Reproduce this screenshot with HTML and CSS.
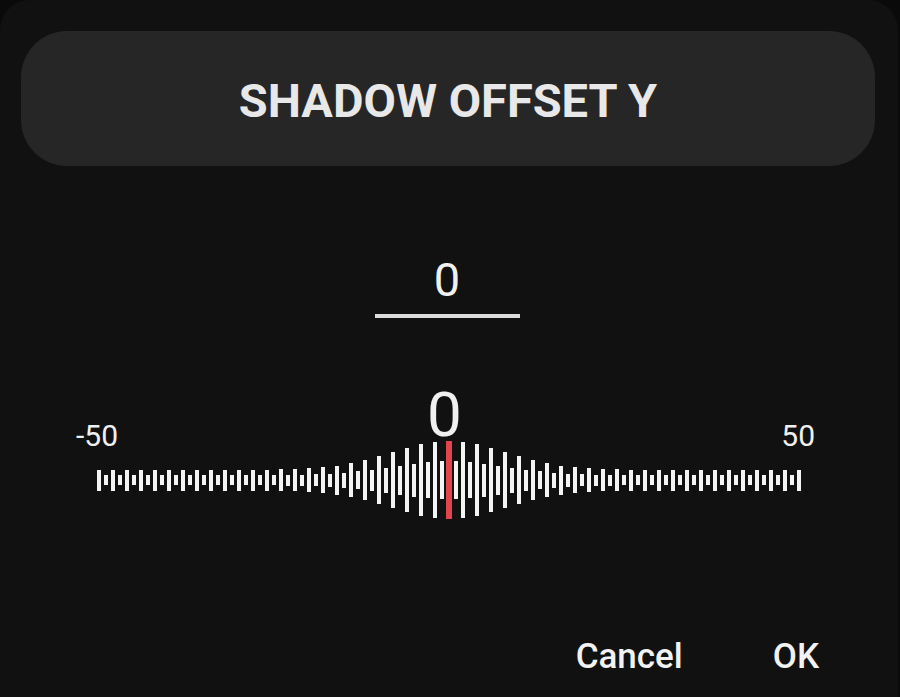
FILE: index.html
```html
<!DOCTYPE html>
<html lang="en">
<head>
    <meta charset="UTF-8">
    <title>Shadow offset Y</title>
    <link rel="stylesheet" href="styles.css">
</head>
<body>
    <div class="dialog">
        <div class="title">SHADOW OFFSET Y</div>

        <div class="value-field">
            <div class="value">0</div>
            <div class="underline"></div>
        </div>

        <div class="ruler">
            <div class="current">0</div>
            <div class="limits">
                <span>-50</span>
                <span>50</span>
            </div>
            <div class="ticks" id="ticks"></div>
        </div>

        <div class="actions">
            <button>Cancel</button>
            <button>OK</button>
        </div>
    </div>

<script>
const ticks = document.getElementById('ticks');
const sigma = 11.5;

for (let i = -50; i <= 50; i++) {
    let d = Math.abs(i);
    let bump = Math.exp(-(d / sigma) * (d / sigma));
    let h = (i % 2 === 0) ? 21 + 57 * bump : 10 + 28 * bump;
    let tick = document.createElement('span');
    tick.className = i === 0 ? 'tick active' : 'tick';
    tick.style.height = Math.round(h) + 'px';
    ticks.appendChild(tick);
}
</script>
</body>
</html>
```

FILE: styles.css
```css
body { margin: 0; background: #0a0a0a; font-family: Roboto, 'Liberation Sans', sans-serif; color: #f0f0f0; }
.dialog { background: #111; height: 697px; border-radius: 30px 30px 0 0; margin-right: 2px; padding-top: 31px; box-sizing: border-box; }

.title { margin: 0 23px 0 21px; height: 135px; border-radius: 46px; background: #262626; display: flex; align-items: center; justify-content: center; padding-top: 3px; box-sizing: border-box; font-size: 47px; font-weight: bold; color: #e8e8e8; }

.value-field { display: flex; flex-direction: column; align-items: center; margin-top: 86px; margin-left: -4px; }
.value { font-size: 47px; line-height: 56px; }
.underline { width: 145px; height: 4px; background: #dcdcdc; margin-top: 6px; }

.ruler { width: 739px; margin: 66px 0 0 76px; display: flex; flex-direction: column; }
.current { align-self: center; font-size: 62px; line-height: 62px; margin-left: -2px; }
.limits { display: flex; justify-content: space-between; font-size: 30px; line-height: 30px; margin-top: -25px; }
.ticks { display: flex; align-items: center; gap: 3px; height: 80px; margin-left: 21px; margin-top: -11px; }
.tick { width: 4px; background: #f4f4f4; flex: none; }
.tick.active { width: 6px; margin: 0 -1px 0 -1px; background: #e0454b; }

.actions { display: flex; justify-content: flex-end; gap: 90px; margin: 116px 79px 0 0; }
.actions button { background: none; border: none; padding: 0; font-family: inherit; font-size: 35px; font-weight: 500; color: #f2f2f2; }
```
